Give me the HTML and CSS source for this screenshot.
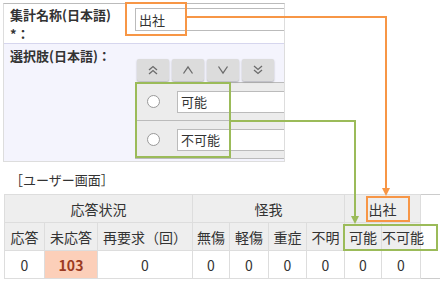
FILE: index.html
```html
<!DOCTYPE html>
<html lang="ja">

<head>
    <meta charset="UTF-8">
    <title>集計設定</title>

    <link rel="stylesheet" href="styles.css">

</head>

<body>

    <div class="page">

        <section class="form-panel">
            <div class="form-row name-row">
                <div class="label">
                    <span class="line">集計名称(日本語)</span>
                    <span class="line">*：</span>
                </div>
                <div class="field">
                    <div class="text-input">出社</div>
                </div>
            </div>
            <div class="form-row choice-row">
                <div class="label">選択肢(日本語)：</div>
                <div class="field">
                    <div class="move-buttons">
                        <button class="move">
                            <svg viewBox="0 0 12 10"><polyline points="2,5 6,1.5 10,5" /><polyline points="2,9 6,5.5 10,9" /></svg>
                        </button>
                        <button class="move">
                            <svg viewBox="0 0 12 10"><polyline points="1.5,8.5 6,2 10.5,8.5" /></svg>
                        </button>
                        <button class="move">
                            <svg viewBox="0 0 12 10"><polyline points="1.5,1.5 6,8 10.5,1.5" /></svg>
                        </button>
                        <button class="move">
                            <svg viewBox="0 0 12 10"><polyline points="2,1 6,4.5 10,1" /><polyline points="2,5 6,8.5 10,5" /></svg>
                        </button>
                    </div>
                    <div class="options">
                        <div class="option">
                            <span class="radio"></span>
                            <div class="text-input">可能</div>
                        </div>
                        <div class="option">
                            <span class="radio"></span>
                            <div class="text-input">不可能</div>
                        </div>
                    </div>
                </div>
            </div>
        </section>

        <p class="caption">［ユーザー画面］</p>

        <table class="user-table">
            <colgroup>
                <col style="width:40px">
                <col style="width:53px">
                <col style="width:95px">
                <col style="width:37px">
                <col style="width:39px">
                <col style="width:38px">
                <col style="width:38px">
                <col style="width:37px">
                <col style="width:39px">
                <col style="width:56px">
            </colgroup>
            <tr>
                <th colspan="3">応答状況</th>
                <th colspan="4">怪我</th>
                <th colspan="2">出社</th>
            </tr>
            <tr>
                <th>応答</th>
                <th>未応答</th>
                <th>再要求（回）</th>
                <th>無傷</th>
                <th>軽傷</th>
                <th>重症</th>
                <th>不明</th>
                <th>可能</th>
                <th>不可能</th>
            </tr>
            <tr>
                <td>0</td>
                <td class="alert">103</td>
                <td>0</td>
                <td>0</td>
                <td>0</td>
                <td>0</td>
                <td>0</td>
                <td>0</td>
                <td>0</td>
            </tr>
        </table>

        <!-- markeringer oven på skærmbilledet -->
        <svg class="annotations" viewBox="0 0 440 281">
            <g class="orange">
                <rect x="126" y="3" width="60" height="32" />
                <path d="M186 17 H386 V189" />
                <polygon points="382,188 390,188 386,196" />
                <rect x="367" y="197" width="42" height="24" />
            </g>
            <g class="green">
                <rect x="136" y="83" width="94" height="74" />
                <path d="M230 121 H355 V217" />
                <polygon points="351,216 359,216 355,224" />
                <rect x="344" y="225" width="93" height="25" />
            </g>
        </svg>

    </div>

</body>

</html>
```

FILE: styles.css
```css
body {
    margin: 0;
    font-family: "Noto Sans CJK JP", "Noto Sans", sans-serif;
    font-size: 13px;
    color: #333;
    background: #fff;
}

.page {
    position: relative;
    width: 440px;
    height: 281px;
    overflow: hidden;
}

.form-panel {
    box-sizing: border-box;
    width: 282px;
    margin: 3px 0 0 3px;
    border-top: 1px solid #bbb;
    border-left: 1px solid #ddd;
    border-right: 1px solid #ddd;
    border-bottom: 1px solid #ddd;
}

.form-row {
    display: grid;
    grid-template-columns: 131px 1fr;
}

.label {
    padding: 5px 0 0 6px;
    font-weight: bold;
    line-height: 17px;
}

.name-row .label {
    padding-top: 1px;
}

.label .line {
    display: block;
    line-height: 19px;
}

.name-row {
    box-sizing: border-box;
    height: 40px;
    background: #fff;
    border-bottom: 1px solid #d6d6ee;
}

.text-input {
    box-sizing: border-box;
    height: 23px;
    padding-left: 3px;
    line-height: 21px;
    background: #fff;
    border: 1px solid #bbb;
    border-right: none;
    white-space: nowrap;
}

.name-row .text-input {
    margin-top: 4px;
}

.choice-row {
    background: #f4f4fd;
    padding-bottom: 2px;
}

.choice-row .label {
    padding-top: 3px;
}

.choice-row .field {
    padding-top: 15px;
}

.move-buttons {
    display: flex;
    gap: 3px;
    margin-left: 2px;
}

.move {
    width: 32px;
    height: 22px;
    padding: 0;
    border: none;
    border-radius: 2px;
    background: #dcdcdc;
    box-shadow: 0 1px 2px rgba(0, 0, 0, 0.28);
    display: flex;
    align-items: center;
    justify-content: center;
}

.move svg {
    width: 12px;
    height: 10px;
    fill: none;
    stroke: #6b6b6b;
    stroke-width: 1.3;
}

.options {
    margin-top: 1px;
    background: #ececec;
    border-top: 1px solid #bbb;
}

.option {
    height: 37px;
    display: flex;
    align-items: center;
    border-bottom: 1px solid #bbb;
}

.radio {
    box-sizing: border-box;
    width: 13px;
    height: 13px;
    margin: 0 17px 0 12px;
    border: 1px solid #999;
    border-radius: 50%;
    background: #fff;
    flex-shrink: 0;
}

.option .text-input {
    flex: 1;
    height: 22px;
    line-height: 20px;
}

.caption {
    margin: 9px 0 0 10px;
    line-height: 18px;
}

.user-table {
    margin: 5px 0 0 4px;
    width: 434px;
    table-layout: fixed;
    border-collapse: collapse;
    border: 1px solid #ccc;
    font-size: 14px;
}

.user-table th,
.user-table td {
    height: 27px;
    padding: 0;
    text-align: center;
    border: 1px solid #ddd;
    white-space: nowrap;
}

.user-table th {
    font-weight: normal;
    background: #eee;
}

.user-table .alert {
    background: #fccfb9;
    color: #9b3a22;
    font-weight: bold;
}

.annotations {
    position: absolute;
    left: 0;
    top: 0;
    width: 440px;
    height: 281px;
    pointer-events: none;
}

.annotations rect,
.annotations path {
    fill: none;
    stroke-width: 2;
}

.orange rect,
.orange path {
    stroke: #f79646;
}

.orange polygon {
    fill: #f79646;
}

.green rect,
.green path {
    stroke: #9bbb59;
}

.green polygon {
    fill: #9bbb59;
}
```
